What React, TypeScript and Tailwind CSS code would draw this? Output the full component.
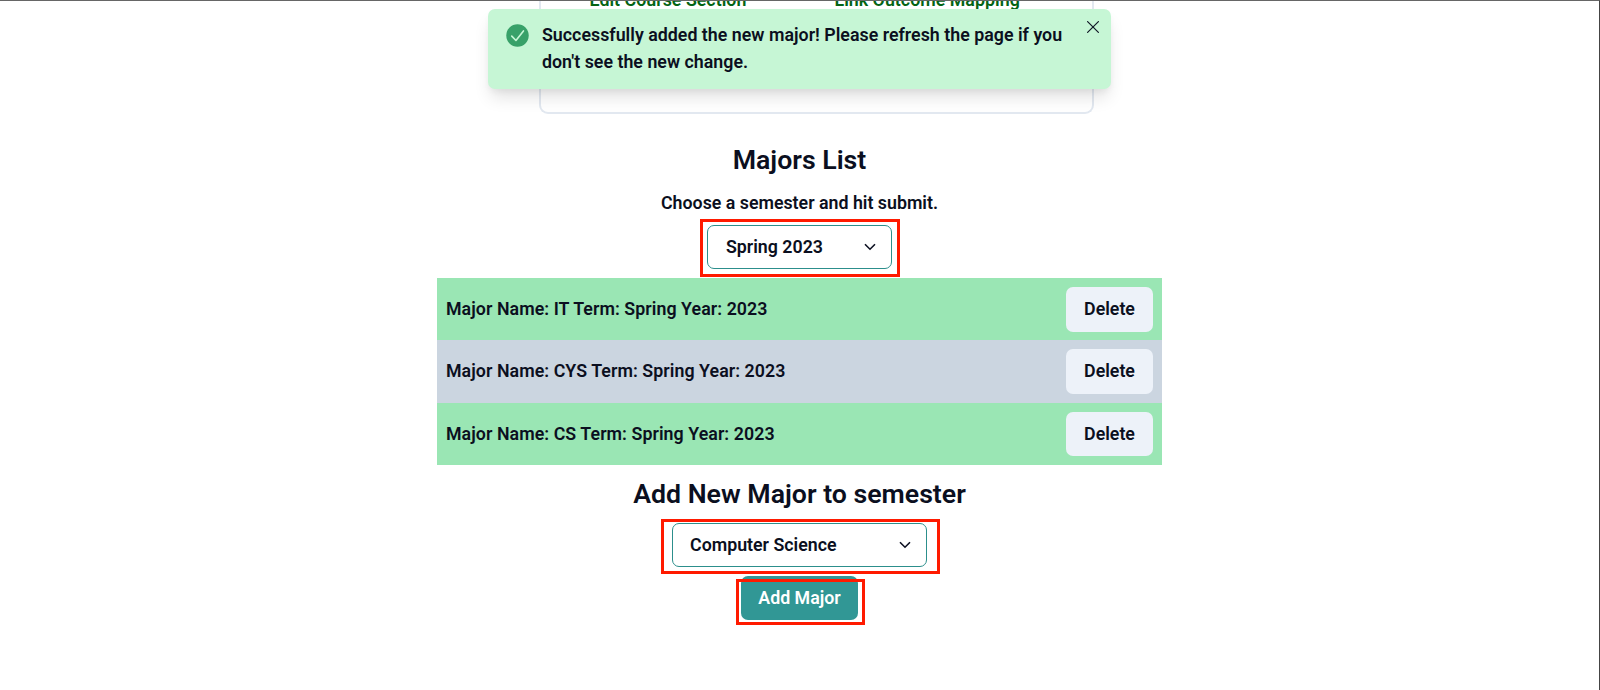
import React from "react";

const majors = [
  { name: "IT", term: "Spring", year: 2023 },
  { name: "CYS", term: "Spring", year: 2023 },
  { name: "CS", term: "Spring", year: 2023 },
];

function ChevronDown() {
  return (
    <svg viewBox="0 0 12 8" className="h-2 w-3" fill="none" stroke="currentColor" strokeWidth="1.6">
      <path d="M1 1.2 L6 6.2 L11 1.2" />
    </svg>
  );
}

function Toast() {
  return (
    <div
      role="status"
      className="absolute top-[8px] left-[488px] flex h-20 w-[623px] items-start rounded-[7px] bg-[#c6f6d5] pt-[13px] pl-[18px] shadow-[0_11px_17px_-3px_rgba(0,0,0,0.12),0_4px_7px_-2px_rgba(0,0,0,0.06)]"
    >
      <svg viewBox="0 0 24 24" className="mt-[2px] h-[23px] w-[23px] shrink-0">
        <circle cx="12" cy="12" r="11.7" fill="#38a169" />
        <path d="M6 12.6 L10.4 17.2 L18.2 7.2" fill="none" stroke="#c6f6d5" strokeWidth="1.7" strokeLinecap="round" strokeLinejoin="round" />
      </svg>
      <p className="ml-[13px] w-[540px] leading-[26.7px] tracking-[0.02px]">
        Successfully added the new major! Please refresh the page if you
        <br />
        don't see the new change.
      </p>
      <button aria-label="Close" className="absolute top-[12px] right-[12px]">
        <svg viewBox="0 0 12 12" className="h-3 w-3" fill="none" stroke="#111827" strokeWidth="1.2" strokeLinecap="round">
          <path d="M0.6 0.6 L11.4 11.4 M11.4 0.6 L0.6 11.4" />
        </svg>
      </button>
    </div>
  );
}

export default function App() {
  return (
    <div className="relative h-[690px] w-[1600px] overflow-hidden border-t border-r border-t-[#666] border-r-[#444] bg-white font-['Roboto',sans-serif] text-[17.8px] font-semibold text-[#0b0f20]">
      <div className="flex w-full flex-col items-center">
        <section className="ml-[33px] flex h-[113px] w-[555px] items-start rounded-b-[9px] border-2 border-t-0 border-[#e2e8f0] pl-[49px] text-[#046414]">
          <span className="-mt-[14px] w-[245px] whitespace-nowrap tracking-[0.03px]">Edit Course Section</span>
          <span className="-mt-[14px] whitespace-nowrap tracking-[0.03px]">Link Outcome Mapping</span>
        </section>

        <h1 className="mt-[28px] text-[26.7px] leading-[36px]">Majors List</h1>
        <p className="mt-[11px] leading-[27px]">Choose a semester and hit submit.</p>

        <div className="relative mt-[9px] h-[44px] w-[185px]">
          <button className="flex h-full w-full items-center justify-between rounded-[7px] border border-[#2c8f8c] pr-[15px] pl-[18px]">
            Spring 2023
            <ChevronDown />
          </button>
          <span className="absolute -top-[6px] -left-[7px] h-[58px] w-[200px] border-[3px] border-[#ff1a00]" />
        </div>

        <ul className="mt-[9.2px] w-[725px]">
          {majors.map((m) => (
            <li key={m.name} className="flex h-[62.3px] items-center justify-between px-[9px] odd:bg-[#9ae6b4] even:bg-[#cbd5e0]">
              <span className="tracking-[0.06px]">
                Major Name: {m.name} Term: {m.term} Year: {m.year}
              </span>
              <button className="h-[44.5px] w-[87px] rounded-[7px] bg-[#edf2f9]">Delete</button>
            </li>
          ))}
        </ul>

        <h2 className="mt-[10.9px] text-[26.7px] leading-[36px]">Add New Major to semester</h2>

        <div className="relative mt-[11px] h-[44px] w-[255px]">
          <button className="flex h-full w-full items-center justify-between rounded-[7px] border border-[#2c8f8c] pr-[15px] pl-[17px]">
            Computer Science
            <ChevronDown />
          </button>
          <span className="absolute -top-[4px] -left-[11px] h-[55px] w-[279px] border-[3px] border-[#ff1a00]" />
        </div>

        <div className="relative mt-[9px] h-[44px] w-[117px]">
          <button className="h-full w-full rounded-[7px] bg-[#319795] pt-px text-white">Add Major</button>
          <span className="absolute top-[3px] -left-[5px] h-[46px] w-[129px] border-[3px] border-[#ff1a00]" />
        </div>
      </div>

      <Toast />
    </div>
  );
}
